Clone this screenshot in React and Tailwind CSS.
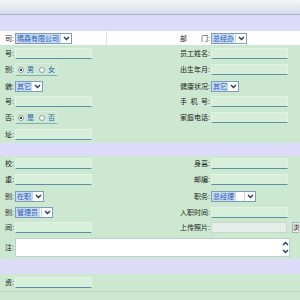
import React from 'react';

const Chevron = ({ up }) => (
  <svg width="7" height="5" viewBox="0 0 7 5">
    <path d={up ? 'M1 4 L3.5 1.5 L6 4' : 'M1 1 L3.5 3.5 L6 1'} fill="none" stroke="#1f3a68" strokeWidth="1.4" />
  </svg>
);

const Select = ({ value, w, textW }) => (
  <div className={`flex h-[11px] ${w} border border-[#7f9db9] bg-white`}>
    <span className={`${textW} bg-[#c6daf3] text-[#2a5cb4] leading-[9px] px-[1px] whitespace-nowrap overflow-hidden`}>{value}</span>
    <span className="flex-1" />
    <span className="w-[11px] flex items-center justify-center bg-white border-l border-[#c9d6e6]">
      <Chevron />
    </span>
  </div>
);

const Input = ({ w = 'w-[77px]' }) => (
  <div className={`${w} h-[11px] bg-[#d7eeda] border border-[#e2f2e4] border-b-[#5a90a6]`} />
);

const Radio = ({ a, b }) => (
  <div className="flex items-center gap-[3px] h-[13px] px-[2px] border border-[#dcefdf] border-b-[#7fb0b6]">
    <span className="w-[6px] h-[6px] rounded-full bg-white border border-[#8a9aa8] flex items-center justify-center">
      <span className="w-[2px] h-[2px] rounded-full bg-black" />
    </span>
    <span className="text-[#2a5cb4]">{a}</span>
    <span className="w-[6px] h-[6px] rounded-full bg-white border border-[#8a9aa8] ml-[2px]" />
    <span className="text-[#2a5cb4]">{b}</span>
  </div>
);

// left labels are cut by the window edge: only their tail is visible
const Row = ({ h, l, lf, r, rf, white }) => (
  <div className={`flex items-center ${h} ${white ? 'bg-white' : ''}`}>
    <div className="w-[15px] shrink-0 flex justify-end whitespace-nowrap pr-[1px]">{l}</div>
    <div className={`w-[92px] shrink-0 flex items-center h-full ${white ? 'border-r border-[#dfe3e8]' : ''}`}>{lf}</div>
    <div className="w-[104px] shrink-0 flex justify-end whitespace-nowrap pr-[1px]">{r}</div>
    <div className="flex-1 flex items-center">{rf}</div>
  </div>
);

export default function App() {
  return (
    <div className="w-[300px] h-[300px] overflow-hidden bg-[#cde8d1] text-[7px] leading-none text-[#1a1a1a] font-['Liberation_Sans','Noto_Sans_CJK_SC',sans-serif]">
      <div className="h-[15px] bg-linear-to-b from-[#f4f6f9] to-[#d6dde8] border-b border-[#a3b2c4]" />
      <div className="h-[16px] bg-[#dcdcf8]" />

      <Row h="h-[14px]" white l="司:" lf={<Select value="瑪森有限公司" w="w-[57px]" textW="w-[44px]" />} r="部　　门:" rf={<Select value="总经办" w="w-[36px]" textW="w-[22px]" />} />
      <Row h="h-[16px]" l="号:" lf={<Input />} r="员工姓名:" rf={<Input />} />
      <Row h="h-[17px]" l="别:" lf={<Radio a="男" b="女" />} r="出生年月:" rf={<Input />} />
      <Row h="h-[16px]" l="貌:" lf={<Select value="其它" w="w-[28px]" textW="w-[15px]" />} r="健康状况:" rf={<Select value="其它" w="w-[28px]" textW="w-[15px]" />} />
      <Row h="h-[15px]" l="号:" lf={<Input />} r={'手\u2002机\u2002号:'} rf={<Input />} />
      <Row h="h-[17px]" l="否:" lf={<Radio a="是" b="否" />} r="家庭电话:" rf={<Input />} />
      <Row h="h-[17px]" l="址:" lf={<Input />} />

      <div className="h-[13px] bg-[#dcdcf8]" />

      <Row h="h-[15px]" l="校:" lf={<Input />} r="身高:" rf={<Input />} />
      <Row h="h-[16px]" l="重:" lf={<Input />} r="邮编:" rf={<Input />} />
      <Row h="h-[18px]" l="别:" lf={<Select value="在职" w="w-[29px]" textW="w-[16px]" />} r="职务:" rf={<Select value="总经理" w="w-[45px]" textW="w-[24px]" />} />
      <Row h="h-[15px]" l="别:" lf={<Select value="管理员" w="w-[38px]" textW="w-[24px]" />} r="入职时间:" rf={<Input />} />
      <Row
        h="h-[15px]"
        l="间:"
        lf={<Input />}
        r="上传照片:"
        rf={
          <div className="flex items-center gap-[5px]">
            <div className="w-[76px] h-[11px] bg-[#e6ece8] border border-[#c8d6cc]" />
            <div className="w-[7px] h-[11px] bg-[#eceff2] border-l border-y border-[#a8b4c0] leading-[9px] overflow-hidden">浏</div>
          </div>
        }
      />
      <div className="flex items-center h-[24px]">
        <div className="w-[15px] shrink-0 flex justify-end whitespace-nowrap pr-[1px]">注:</div>
        <div className="w-[275px] h-[19px] bg-white border border-[#b9d2cf] flex justify-end">
          <div className="w-[8px] flex flex-col items-center justify-between py-[2px]">
            <Chevron up />
            <Chevron />
          </div>
        </div>
      </div>

      <div className="h-[15px] bg-[#dcdcf8]" />

      <Row h="h-[17px]" l="资:" lf={<Input />} />
      <div className="border-t border-[#b7d6bd]" />
    </div>
  );
}
